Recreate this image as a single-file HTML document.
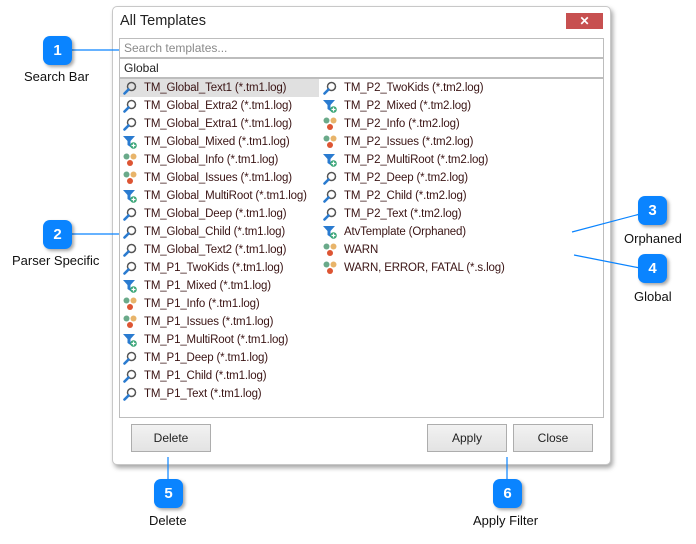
<!DOCTYPE html>
<html><head><meta charset="utf-8"><style>
*{margin:0;padding:0;box-sizing:border-box}
body{width:696px;height:544px;background:#fff;position:relative;overflow:hidden;font-family:"Liberation Sans",sans-serif}
.dlg{position:absolute;left:112px;top:6px;width:499px;height:459px;background:#fff;border:1px solid #c8c8c8;border-radius:5px;box-shadow:2px 3px 5px rgba(0,0,0,.35)}
.title{position:absolute;left:120px;top:13px;font-size:14.5px;color:#222}
.xb{position:absolute;left:566px;top:13px;width:37px;height:16px;background:#c75050;color:#fff;font-size:12px;text-align:center;line-height:16px;font-weight:bold}
.box{position:absolute;left:119px;width:485px;border:1px solid #bdbdbd;background:#fff;font-size:12px;padding-left:4px}
.row{position:absolute;height:18px;font-size:11.5px;letter-spacing:-0.15px;color:#3a1414;line-height:18px;white-space:nowrap}
.row svg{position:absolute;left:-21px;top:2px}
.btn{position:absolute;top:424px;width:80px;height:28px;border:1px solid #adadad;background:linear-gradient(#f2f2f2,#e3e3e3);font-size:12px;text-align:center;line-height:26px;color:#222}
.bd{position:absolute;width:29px;height:29px;border-radius:7px;background:#0a84ff;color:#fff;font-weight:bold;font-size:15px;text-align:center;line-height:29px;box-shadow:2px 2px 3px rgba(0,0,0,.35)}
.lb{position:absolute;font-size:13px;color:#111;white-space:nowrap}
</style></head><body>
<div class="dlg"></div>
<div class="title">All Templates</div>
<div class="xb">✕</div>
<div class="box" style="top:38px;height:20px;line-height:18px;color:#8a8a8a">Search templates...</div>
<div class="box" style="top:58px;height:20px;line-height:18px;color:#222">Global</div>
<div class="box" style="top:78px;height:340px"></div>
<div style="position:absolute;left:120px;top:79px;width:199px;height:18px;background:#e0e0e0"></div>
<svg width="0" height="0" style="position:absolute"><defs>
<symbol id="m" viewBox="0 0 14 14"><circle cx="8.5" cy="5.5" r="4" fill="none" stroke="#555" stroke-width="1.5"/><line x1="5.5" y1="8.5" x2="1.5" y2="12.5" stroke="#2a7bd0" stroke-width="2.6" stroke-linecap="round"/></symbol>
<symbol id="f" viewBox="0 0 14 14"><path d="M0 1h12l-4.5 5v6l-3-2v-4z" fill="#2a7bd0"/><circle cx="10.5" cy="10.5" r="3.3" fill="#3aa676"/><path d="M10.5 8.5v4M8.5 10.5h4" stroke="#fff" stroke-width="1.2"/></symbol>
<symbol id="d" viewBox="0 0 14 14"><circle cx="3.5" cy="3.5" r="3" fill="#6aaa8a"/><circle cx="10.5" cy="3.5" r="3" fill="#e8b46a"/><circle cx="7" cy="10" r="3" fill="#dd5533"/></symbol>
</defs></svg>
<div id="rows"></div>
<script>
var c1=[["m","TM_Global_Text1 (*.tm1.log)"],["m","TM_Global_Extra2 (*.tm1.log)"],["m","TM_Global_Extra1 (*.tm1.log)"],["f","TM_Global_Mixed (*.tm1.log)"],["d","TM_Global_Info (*.tm1.log)"],["d","TM_Global_Issues (*.tm1.log)"],["f","TM_Global_MultiRoot (*.tm1.log)"],["m","TM_Global_Deep (*.tm1.log)"],["m","TM_Global_Child (*.tm1.log)"],["m","TM_Global_Text2 (*.tm1.log)"],["m","TM_P1_TwoKids (*.tm1.log)"],["f","TM_P1_Mixed (*.tm1.log)"],["d","TM_P1_Info (*.tm1.log)"],["d","TM_P1_Issues (*.tm1.log)"],["f","TM_P1_MultiRoot (*.tm1.log)"],["m","TM_P1_Deep (*.tm1.log)"],["m","TM_P1_Child (*.tm1.log)"],["m","TM_P1_Text (*.tm1.log)"]];
var c2=[["m","TM_P2_TwoKids (*.tm2.log)"],["f","TM_P2_Mixed (*.tm2.log)"],["d","TM_P2_Info (*.tm2.log)"],["d","TM_P2_Issues (*.tm2.log)"],["f","TM_P2_MultiRoot (*.tm2.log)"],["m","TM_P2_Deep (*.tm2.log)"],["m","TM_P2_Child (*.tm2.log)"],["m","TM_P2_Text (*.tm2.log)"],["f","AtvTemplate (Orphaned)"],["d","WARN"],["d","WARN, ERROR, FATAL (*.s.log)"]];
var h="";
function add(a,x){a.forEach(function(r,i){h+='<div class="row" style="left:'+x+'px;top:'+(79+i*18)+'px"><svg width="14" height="14"><use href="#'+r[0]+'"/></svg>'+r[1]+'</div>';});}
add(c1,144);add(c2,344);
document.getElementById("rows").innerHTML=h;
</script>
<div class="btn" style="left:131px">Delete</div>
<div class="btn" style="left:427px">Apply</div>
<div class="btn" style="left:513px">Close</div>
<svg width="696" height="544" style="position:absolute;left:0;top:0">
<g stroke="#0a84ff" stroke-width="1.2">
<line x1="71" y1="50" x2="119" y2="50"/><line x1="71" y1="234" x2="119" y2="234"/>
<line x1="640" y1="214" x2="572" y2="232"/><line x1="640" y1="268" x2="574" y2="255"/>
<line x1="168" y1="457" x2="168" y2="479"/><line x1="507" y1="457" x2="507" y2="479"/>
</g></svg>
<div class="bd" style="left:43px;top:36px">1</div><div class="lb" style="left:24px;top:69px">Search Bar</div>
<div class="bd" style="left:43px;top:220px">2</div><div class="lb" style="left:12px;top:253px">Parser Specific</div>
<div class="bd" style="left:638px;top:196px">3</div><div class="lb" style="left:624px;top:231px">Orphaned</div>
<div class="bd" style="left:638px;top:254px">4</div><div class="lb" style="left:634px;top:289px">Global</div>
<div class="bd" style="left:154px;top:479px">5</div><div class="lb" style="left:149px;top:513px">Delete</div>
<div class="bd" style="left:493px;top:479px">6</div><div class="lb" style="left:473px;top:513px">Apply Filter</div>
</body></html>
